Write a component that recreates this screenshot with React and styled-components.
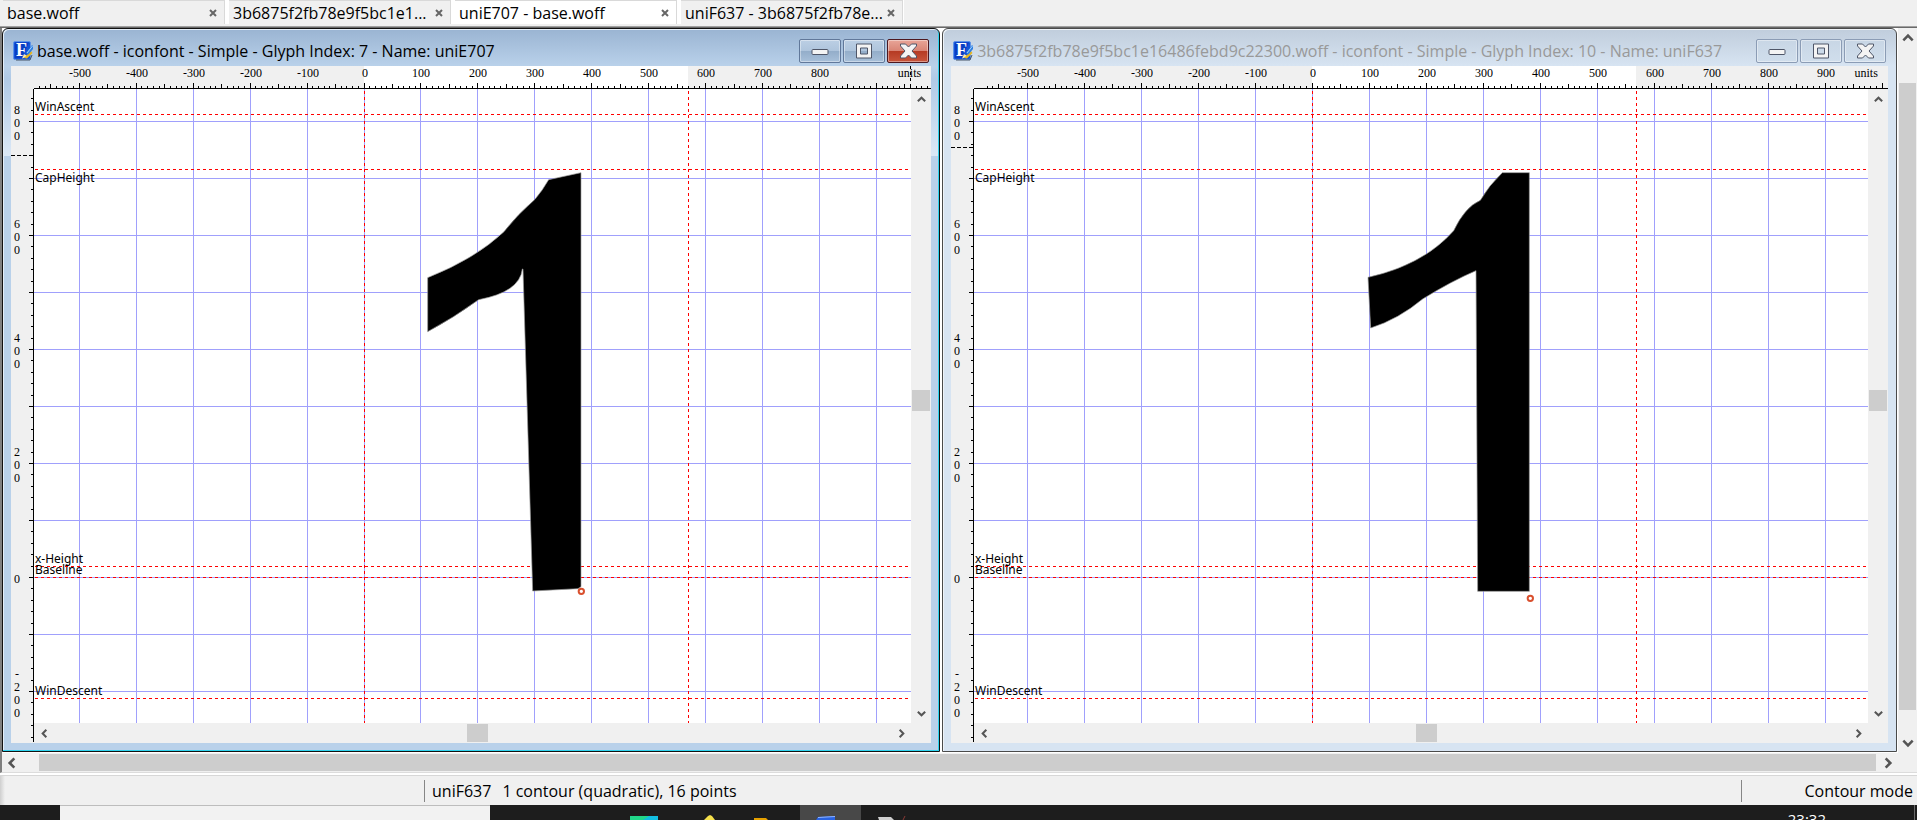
import React from 'react';
import styled, { createGlobalStyle, css } from 'styled-components';

const GlobalStyle = createGlobalStyle`
  * {
    box-sizing: border-box;
  }

  body {
    margin: 0;
    background: #f0f0f0;
    color: #000;
    font-family: 'Open Sans', 'Noto Sans', sans-serif;
    font-size: 16px;
    overflow: hidden;
  }

  button,
  input {
    margin: 0;
    padding: 0;
    border: 0;
    background: none;
    color: inherit;
    font: inherit;
  }
`;

const Page = styled.div`
  display: flex;
  flex-direction: column;
  height: 100vh;
  overflow: hidden;
`;

const TabStrip = styled.div`
  display: flex;
  flex: none;
  height: 28px;
  padding: 0 0 4px 3px;
  background: #f0f0f0;
  box-shadow: inset 0 -1px 0 #696969, inset 0 -2px 0 #a0a0a0;
`;

const TabList = styled.div`
  display: flex;
  gap: 4px;
  padding-right: 1px;
  background: #fff;
`;

const Tab = styled.div`
  display: flex;
  align-items: center;
  width: 222px;
  height: 24px;
  padding: 0 6px 0 4px;
  border: solid #d9d9d9;
  border-width: 1px 1px 0 0;
  background: ${(props) => (props.$active ? '#fff' : '#f0f0f0')};
`;

const TabName = styled.button`
  flex: 1;
  min-width: 0;
  line-height: 22px;
  text-align: left;
  white-space: nowrap;
`;

const TabClose = styled.button`
  display: flex;
  padding: 1px;
`;

const Workspace = styled.div`
  display: grid;
  flex: 1;
  grid-template-columns: 1fr 19px;
  grid-template-rows: 1fr 19px;
  min-height: 0;
  border-left: 2px solid #808080;
  border-bottom: 1px solid #dcdcdc;
`;

const Desktop = styled.main`
  display: flex;
  gap: 2px;
  min-width: 0;
  min-height: 0;
  padding: 0 1px 1px 0;
  background: #fff;
`;

const activeFrame = css`
  border: 1px solid #111;
  background: linear-gradient(#9ab4d2 0, #b9d1ea 37px, #b0cae6 50px, #dbe8f6 127px, #b9d1ea 127px);
  box-shadow: inset -1px -1px 0 #2fd3ee, inset 1px 1px 0 #e4eef8;
`;

const inactiveFrame = css`
  border: 1px solid #4a4a4a;
  background: linear-gradient(#c0cddc 0, #d7e4f2 37px);
  box-shadow: inset 1px 1px 0 #eef3f8;
`;

const Frame = styled.section`
  display: flex;
  flex: ${(props) => props.$share} 1 0;
  flex-direction: column;
  min-width: 0;
  padding: 0 8px 8px;
  border-radius: 6px 6px 0 0;
  ${(props) => (props.$active ? activeFrame : inactiveFrame)}
`;

const TitleBar = styled.header`
  display: flex;
  flex: none;
  gap: 4px;
  height: 37px;
  padding: 10px 2px 0;
`;

const TitleIcon = styled.svg`
  flex: none;
  margin-top: 2px;
`;

const IconLetter = styled.text`
  font-family: 'Liberation Serif', serif;
  font-size: 18px;
  font-weight: 700;
  fill: #fff;
`;

const Title = styled.h2`
  flex: 1;
  min-width: 0;
  margin: 0;
  overflow: hidden;
  color: ${(props) => (props.$active ? '#000' : '#999')};
  font-size: 16px;
  font-weight: 400;
  line-height: 25px;
  white-space: nowrap;
`;

const TitleButtons = styled.div`
  display: flex;
  gap: 2px;
`;

const buttonFills = {
  normal: 'linear-gradient(#bccfe4 0, #aec4dc 50%, #93adc9 50%, #a8c0da 100%)',
  close: 'linear-gradient(#e8a598 0, #d98576 48%, #b53a23 50%, #c8553c 100%)',
  inactive: 'linear-gradient(#c8d6e5, #d0deec)',
};

const TitleButton = styled.button`
  display: flex;
  align-items: center;
  justify-content: center;
  width: 42px;
  height: 24px;
  border: 1px solid ${(props) => (props.$kind === 'close' ? '#4d1820' : props.$kind === 'normal' ? '#61789a' : '#8b9cb5')};
  border-radius: 2px;
  background: ${(props) => buttonFills[props.$kind]};
  box-shadow: inset 0 0 0 1px rgba(255, 255, 255, 0.4);
`;

const Client = styled.div`
  display: grid;
  flex: 1;
  grid-template-columns: 23px 1fr 20px;
  grid-template-rows: 23px 1fr 20px;
  min-height: 0;
  background: #f0f0f0;
`;

const Drawing = styled.svg`
  display: block;
  width: 100%;
  height: 100%;
  overflow: hidden;
`;

const TopRuler = styled.div`
  grid-column: 1 / -1;
  min-width: 0;
`;

const SideRuler = styled.div`
  grid-row: 2 / 4;
  min-height: 0;
`;

const Canvas = styled.div`
  min-width: 0;
  min-height: 0;
  background: #fff;
`;

const RulerText = styled.text`
  font-family: 'Liberation Serif', serif;
  font-size: 12px;
  text-anchor: ${(props) => props.$anchor || 'middle'};
`;

const GuideText = styled.text`
  font-family: 'Noto Sans', sans-serif;
  font-size: 12px;
`;

const Bar = styled.div`
  display: flex;
  flex-direction: ${(props) => (props.$vertical ? 'column' : 'row')};
  min-width: 0;
  min-height: 0;
  background: #f0f0f0;
`;

const BarButton = styled.button`
  display: flex;
  flex: none;
  align-items: center;
  justify-content: center;
  width: ${(props) => (props.$vertical ? '100%' : '20px')};
  height: ${(props) => (props.$vertical ? '20px' : '100%')};
`;

const BarSpace = styled.div`
  flex: ${(props) => props.$grow} 1 0;
`;

const BarThumb = styled.div`
  flex: ${(props) => (props.$grow ? `${props.$grow} 1 0` : '0 0 21px')};
  margin: ${(props) => (props.$vertical ? '0 1px' : '1px 0')};
  background: #cdcdcd;
`;

const StatusBar = styled.footer`
  display: flex;
  flex: none;
  align-items: center;
  height: 32px;
  padding: 2px 4px 0 424px;
  border-top: 2px solid #fff;
  background: linear-gradient(to right, #cfcfcf, #f0f0f0 5px);
  box-shadow: inset 0 1px 0 #d7d7d7;
`;

const StatusText = styled.div`
  display: flex;
  flex: 1;
  gap: 11px;
  padding-left: 7px;
  border-left: 1px solid #868686;
  line-height: 22px;
`;

const StatusMode = styled.div`
  width: 172px;
  border-left: 1px solid #868686;
  line-height: 22px;
  text-align: right;
`;

const Taskbar = styled.nav`
  display: flex;
  flex: none;
  height: 15px;
  padding-left: 60px;
  overflow: hidden;
  background: #1d1d1d;
`;

const SearchBox = styled.input`
  width: 430px;
  height: 40px;
  margin-right: 127px;
  border-top: 1px solid #bdbdbd;
  background: #f2f2f2;
`;

const TaskButton = styled.button`
  width: 61px;
  height: 40px;
  background: ${(props) => (props.$active ? '#484848' : 'transparent')};
  
  svg {
    display: block;
  }
`;

const Clock = styled.time`
  margin-left: auto;
  padding: 4px 88px 0 0;
  color: #fff;
  font-size: 15px;
  line-height: 20px;
`;

const ShowDesktop = styled.button`
  width: 3px;
  height: 40px;
  border-left: 1px solid #6a6a6a;
`;

const tabs = [
  { name: 'base.woff' },
  { name: '3b6875f2fb78e9f5bc1e1...' },
  { name: 'uniE707 - base.woff', active: true },
  { name: 'uniF637 - 3b6875f2fb78e...' },
];

const guides = [
  { name: 'WinAscent', y: 25, label: 22 },
  { name: 'CapHeight', y: 80, label: 93 },
  { name: 'x-Height', y: 477, label: 474 },
  { name: 'Baseline', y: 488, label: 485 },
  { name: 'WinDescent', y: 609, label: 606 },
];

const glyphs = [
  {
    title: 'base.woff - iconfont - Simple - Glyph Index: 7 - Name: uniE707',
    active: true,
    share: 938,
    origin: 330,
    scale: 0.5693,
    advance: 654,
    lastLabel: 800,
    cursor: { x: 876, y: 66 },
    thumb: [413, 403],
    path: 'M543 38 L446 59 Q427 92 405 118 Q352 164 312 215 Q225 297 83 353 L83 515 Q160 474 236 419 Q360 396 367 327 L369 327 L398 1293 L534 1286 L543 1280 Z',
    point: { x: 544, y: 1294 },
  },
  {
    title: '3b6875f2fb78e9f5bc1e16486febd9c22300.woff - iconfont - Simple - Glyph Index: 10 - Name: uniF637',
    active: false,
    share: 955,
    origin: 338,
    scale: 0.57,
    advance: 662,
    lastLabel: 900,
    cursor: { y: 58 },
    thumb: [422, 411],
    path: 'M568 38 L487 38 Q445 78 421 121 Q375 141 341 212 Q250 315 84 352 L92 504 Q175 478 248 417 Q335 363 408 332 L413 1294 L568 1294 Z',
    point: { x: 571, y: 1315 },
  },
];

const range = (from, to, step) => {
  const values = [];
  for (let value = from; value <= to; value += step) values.push(value);
  return values;
};

const CANVAS_ZERO_Y = 488;
const toX = (glyph, units) => Math.floor(glyph.origin + units * glyph.scale);
const toY = (units) => Math.round(CANVAS_ZERO_Y - units * 0.57);

const CloseMark = () => (
  <svg width="8" height="8" viewBox="0 0 8 8">
    <path d="M1 1 L7 7 M7 1 L1 7" stroke="#666" strokeWidth="2" />
  </svg>
);

const AppIcon = () => (
  <TitleIcon width="20" height="20" viewBox="0 0 20 20">
    <rect x="0.5" y="0.5" width="17" height="18" rx="1.5" fill="#1453d8" stroke="#5e93e6" />
    <path d="M2 1.5 H16 L9 17 H2 Z" fill="#0a3ec4" />
    <IconLetter x="3" y="15">F</IconLetter>
    <path d="M9 17.5 L11 13 L15 15.5 Z" fill="#fbe8a8" />
    <path d="M11 17 L18 10 L19.5 12 L14 17.5 Z" fill="#e8b720" />
    <path d="M13 12 L19 4 L20 5 V8 L15.5 13.5 Z" fill="#2f7fe0" />
    <path d="M14 12 L19.5 5" stroke="#9fd0ff" />
    <path d="M3 19 H17 L19 14" fill="none" stroke="#465466" />
  </TitleIcon>
);

const MinimizeMark = () => (
  <svg width="18" height="8" viewBox="0 0 18 8">
    <rect x="1" y="2.5" width="16" height="5" rx="1" fill="#f4f4f4" stroke="#4f5668" />
  </svg>
);

const MaximizeMark = () => (
  <svg width="18" height="16" viewBox="0 0 18 16">
    <path d="M1.5 1 H16.5 V15 H1.5 Z M5.5 5 V11 H12.5 V5 Z" fill="#f4f4f4" fillRule="evenodd" stroke="#4f5668" strokeLinejoin="round" />
  </svg>
);

const CrossMark = () => (
  <svg width="19" height="16" viewBox="0 0 19 16">
    <path
      d="M1.5 1 H6.5 L9.5 4 L12.5 1 H17.5 V3 L13 8 L17.5 13 V15 H12.5 L9.5 12 L6.5 15 H1.5 V13 L6 8 L1.5 3 Z"
      fill="#f4f4f4"
      stroke="#4f5668"
      strokeLinejoin="round"
    />
  </svg>
);

const arrows = {
  up: 'M2 8 L6 4 L10 8',
  down: 'M2 4 L6 8 L10 4',
  left: 'M8 2 L4 6 L8 10',
  right: 'M4 2 L8 6 L4 10',
};

const Arrow = ({ to, size = 11 }) => (
  <svg width={size} height={size} viewBox="0 0 12 12">
    <path d={arrows[to]} fill="none" stroke="#555" strokeWidth="2.2" />
  </svg>
);

const ScrollBar = ({ vertical, before, thumb, after, size }) => (
  <Bar $vertical={vertical}>
    <BarButton $vertical={vertical} aria-label={vertical ? 'Scroll up' : 'Scroll left'}>
      <Arrow to={vertical ? 'up' : 'left'} size={size} />
    </BarButton>
    <BarSpace $grow={before} />
    <BarThumb $vertical={vertical} $grow={thumb} />
    <BarSpace $grow={after} />
    <BarButton $vertical={vertical} aria-label={vertical ? 'Scroll down' : 'Scroll right'}>
      <Arrow to={vertical ? 'down' : 'right'} size={size} />
    </BarButton>
  </Bar>
);

const HorizontalRuler = ({ glyph }) => {
  const left = 23;
  const tickTop = (units) => (units % 100 === 0 ? 17 : units % 50 === 0 ? 18 : 20);

  return (
    <Drawing shapeRendering="crispEdges">
      <rect x={left + glyph.origin} y="0" width={glyph.advance - glyph.origin} height="23" fill="#fff" />
      <line x1={left} x2="100%" y1="22.5" y2="22.5" stroke="#000" />
      {range(-570, 1000, 10).map((units) => {
        const x = left + toX(glyph, units) + 0.5;
        return <line key={units} x1={x} x2={x} y1={tickTop(units)} y2="22" stroke="#000" />;
      })}
      {range(-500, glyph.lastLabel, 100).map((units) => (
        <RulerText key={units} x={left + toX(glyph, units) + 1} y="11">{units}</RulerText>
      ))}
      <svg x="100%" overflow="visible">
        <RulerText x="-10" y="11" $anchor="end">units</RulerText>
      </svg>
      {glyph.cursor.x && (
        <line x1={left + glyph.cursor.x + 0.5} x2={left + glyph.cursor.x + 0.5} y1="0" y2="22" stroke="#000" strokeDasharray="3 3" />
      )}
    </Drawing>
  );
};

const VerticalRuler = ({ glyph }) => (
  <Drawing shapeRendering="crispEdges">
    <line x1="22.5" x2="22.5" y1="0" y2="653" stroke="#000" />
    {range(-280, 840, 20).map((units) => {
      const y = toY(units) + 0.5;
      return <line key={units} x1={units % 100 === 0 ? 18 : 20} x2="22" y1={y} y2={y} stroke="#000" />;
    })}
    {range(-200, 800, 200).map((units) => {
      const chars = String(units).split('');
      return chars.map((char, i) => (
        <RulerText key={`${units}-${i}`} x="6" y={toY(units) + 6 + Math.round(13 * (i - (chars.length - 1) / 2))}>
          {char}
        </RulerText>
      ));
    })}
    <line x1="0" x2="22" y1={glyph.cursor.y + 0.5} y2={glyph.cursor.y + 0.5} stroke="#000" strokeDasharray="4 2" />
  </Drawing>
);

const GlyphCanvas = ({ glyph }) => (
  <Drawing>
    <g shapeRendering="crispEdges" stroke="#a0a0fc">
      {range(-500, 900, 100).map((units) => {
        const x = toX(glyph, units) + 0.5;
        return <line key={units} x1={x} x2={x} y1="0" y2="100%" />;
      })}
      {range(-200, 800, 100).map((units) => {
        const y = toY(units) + 0.5;
        return <line key={units} x1="0" x2="100%" y1={y} y2={y} />;
      })}
    </g>
    <g shapeRendering="crispEdges" stroke="#f00" strokeDasharray="3 3">
      {guides.map((guide) => (
        <line key={guide.name} x1="1" x2="100%" y1={guide.y + 0.5} y2={guide.y + 0.5} />
      ))}
      <line x1={glyph.origin + 0.5} x2={glyph.origin + 0.5} y1="2" y2="100%" />
      <line x1={glyph.advance + 0.5} x2={glyph.advance + 0.5} y1="2" y2="100%" />
    </g>
    {guides.map((guide) => (
      <GuideText key={guide.name} x="1" y={guide.label}>{guide.name}</GuideText>
    ))}
    <g transform="translate(366 71) scale(0.33333)">
      <path d={glyph.path} fill="#000" stroke="#999" strokeWidth="2" />
      <circle cx={glyph.point.x} cy={glyph.point.y} r="8" fill="#fff" stroke="#d9502e" strokeWidth="6" />
    </g>
  </Drawing>
);

const GlyphWindow = ({ glyph }) => {
  const kind = glyph.active ? 'normal' : 'inactive';

  return (
    <Frame $active={glyph.active} $share={glyph.share}>
      <TitleBar>
        <AppIcon />
        <Title $active={glyph.active}>{glyph.title}</Title>
        <TitleButtons>
          <TitleButton $kind={kind} aria-label="Minimize"><MinimizeMark /></TitleButton>
          <TitleButton $kind={kind} aria-label="Maximize"><MaximizeMark /></TitleButton>
          <TitleButton $kind={glyph.active ? 'close' : 'inactive'} aria-label="Close"><CrossMark /></TitleButton>
        </TitleButtons>
      </TitleBar>
      <Client>
        <TopRuler><HorizontalRuler glyph={glyph} /></TopRuler>
        <SideRuler><VerticalRuler glyph={glyph} /></SideRuler>
        <Canvas><GlyphCanvas glyph={glyph} /></Canvas>
        <ScrollBar vertical before={281} after={292} />
        <ScrollBar before={glyph.thumb[0]} after={glyph.thumb[1]} />
      </Client>
    </Frame>
  );
};

const taskIcons = [
  {
    name: 'Editor',
    art: <path d="M13 11 H41 V15 H13 Z" fill="#21d789" />,
    extra: <path d="M32 11 H41 V15 H26 Z" fill="#12bde0" />,
  },
  { name: 'Drawing', art: <path d="M26 15 L30 11 L32 10 L34 11 L37 15 Z" fill="#f5e04b" /> },
  { name: 'Files', art: <path d="M15 15 V13 H27 L29 15 Z" fill="#e6a100" /> },
  {
    name: 'Font editor',
    active: true,
    art: <path d="M16 15 L18 12 L35 11 V15 Z" fill="#2a63e0" />,
    extra: <path d="M18 12.5 L35 11.5" stroke="#8fb4ff" />,
  },
  {
    name: 'Notes',
    art: <path d="M17 12 H30 L33 15 H18 Z" fill="#cfcfcf" />,
    extra: <path d="M42 15 L44 11" stroke="#8a3a34" />,
  },
];

const App = () => (
  <>
    <GlobalStyle />
    <Page>
      <TabStrip>
        <TabList>
          {tabs.map((tab) => (
            <Tab key={tab.name} $active={tab.active}>
              <TabName>{tab.name}</TabName>
              <TabClose aria-label={`Close ${tab.name}`}><CloseMark /></TabClose>
            </Tab>
          ))}
        </TabList>
      </TabStrip>
      <Workspace>
        <Desktop>
          {glyphs.map((glyph) => (
            <GlyphWindow key={glyph.title} glyph={glyph} />
          ))}
        </Desktop>
        <ScrollBar vertical before={35} thumb={627} after={23} size={14} />
        <ScrollBar before={17} thumb={1837} after={2} size={14} />
      </Workspace>
      <StatusBar>
        <StatusText>
          <span>uniF637</span>
          <span>1 contour (quadratic), 16 points</span>
        </StatusText>
        <StatusMode>Contour mode</StatusMode>
      </StatusBar>
      <Taskbar>
        <SearchBox type="text" aria-label="Search" />
        {taskIcons.map((item) => (
          <TaskButton key={item.name} $active={item.active} aria-label={item.name}>
            <svg width="61" height="40" viewBox="0 0 61 40">
              {item.art}
              {item.extra}
            </svg>
          </TaskButton>
        ))}
        <Clock>23:32</Clock>
        <ShowDesktop aria-label="Show desktop" />
      </Taskbar>
    </Page>
  </>
);

export default App;
